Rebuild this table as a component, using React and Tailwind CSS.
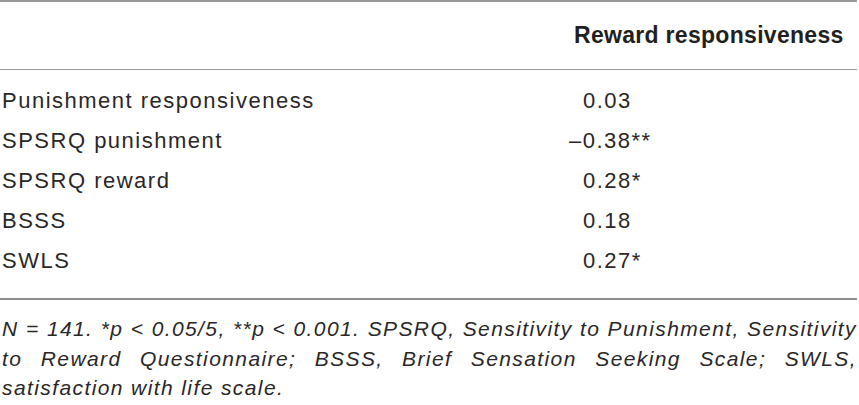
import React from "react";

const rows = [
  { label: "Punishment responsiveness", value: "0.03" },
  { label: "SPSRQ punishment", value: "–0.38**", neg: true },
  { label: "SPSRQ reward", value: "0.28*" },
  { label: "BSSS", value: "0.18" },
  { label: "SWLS", value: "0.27*" },
];

const App = () => {
  return (
    <div className="w-[859px] h-[405px] bg-white text-[#2a2728] font-['Liberation_Sans',Arial,sans-serif] overflow-hidden">
      <div className="w-[857px]">
        <div className="grid grid-cols-[574px_1fr] h-[70px] items-center border-t-2 border-b border-[#9a9a9a]">
          <div></div>
          <div className="text-[23px] font-bold tracking-[0.3px] text-[#231f20]">Reward responsiveness</div>
        </div>
        <div className="pt-[10px] pb-[18px] border-b-2 border-[#8f8f8f]">
          {rows.map((r) => (
            <div key={r.label} className="grid grid-cols-[574px_1fr] h-[40px] items-center text-[22px] tracking-[1.5px]">
              <div className="pl-[2px]">{r.label}</div>
              <div className={r.neg ? "-ml-[5px]" : "pl-[9px]"}>{r.value}</div>
            </div>
          ))}
        </div>
        <div className="pt-[14px] italic text-[21px] leading-[29.5px] tracking-[1.4px] pl-[2px]">
          <div className="text-justify [text-align-last:justify]">
            N = 141. *p &lt; 0.05/5, **p &lt; 0.001. SPSRQ, Sensitivity to Punishment, Sensitivity
          </div>
          <div className="text-justify [text-align-last:justify]">
            to Reward Questionnaire; BSSS, Brief Sensation Seeking Scale; SWLS,
          </div>
          <div>satisfaction with life scale.</div>
        </div>
      </div>
    </div>
  );
};

export default App;
